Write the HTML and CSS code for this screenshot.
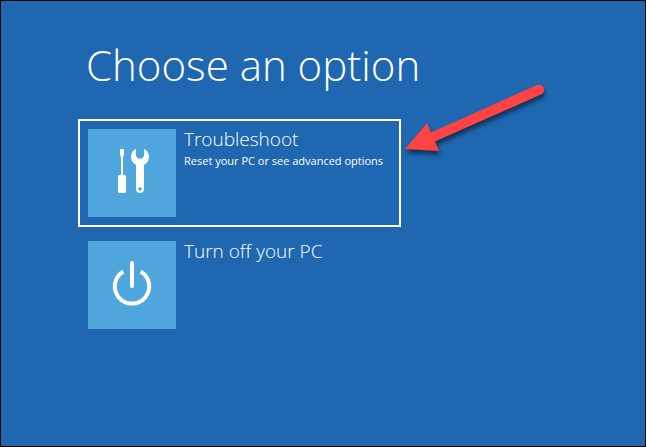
FILE: index.html
```html
<!DOCTYPE html>
<html lang="en">
<head>
    <meta charset="UTF-8">
    <title>Choose an option</title>
    <link rel="stylesheet" href="styles.css">
</head>
<body>
    <main class="screen">
        <h1 class="title">Choose an option</h1>

        <div class="options">
            <!-- Troubleshoot -->
            <button class="option selected" type="button">
                <svg class="tile" viewBox="0 0 88 88" aria-hidden="true">
                    <path fill="#fff" d="M32 20h4v5l-1 4v17h1.500q1.500 0 1.500 1.500v15q0 1.500-1.500 1.500h-5q-1.500 0-1.500-1.500v-15q0-1.500 1.500-1.500H33V29l-1-4z"/>
                    <path fill="#fff" fill-rule="evenodd" d="M48 20v7l2 2.500h4l2-2.500v-7c3 1.300 5 4.300 5 8 0 3.600-2 6.500-5 8v24a4 4 0 0 1-8 0V36c-3-1.500-5-4.400-5-8 0-3.700 2-6.700 5-8zM52 58.200a1.800 1.800 0 1 0 0 3.600a1.800 1.800 0 1 0 0-3.600z"/>
                </svg>
                <span class="text">
                    <span class="name">Troubleshoot</span>
                    <span class="hint">Reset your PC or see advanced options</span>
                </span>
            </button>

            <!-- Turn off -->
            <button class="option" type="button">
                <svg class="tile" viewBox="0 0 88 88" aria-hidden="true">
                    <g fill="none" stroke="#fff" stroke-width="4">
                        <path d="M35.300 30.500a17.200 17.200 0 1 0 17.400 0"/>
                        <path stroke-linecap="round" d="M44 22v23"/>
                    </g>
                </svg>
                <span class="text">
                    <span class="name">Turn off your PC</span>
                </span>
            </button>

            <svg class="arrow" viewBox="0 0 152 84" aria-hidden="true">
                <path fill="#ff4343" d="M4 68L26 42l4 9.500L136 4a5 5 0 0 1 4 9.500L34 60.500l4 9.500z"/>
            </svg>
        </div>
    </main>
</body>
</html>
```
FILE: styles.css
```css
* {
    box-sizing: border-box;
}

body {
    margin: 0;
    background: #1f67b1;
    color: white;
    font-family: "Open Sans", "Noto Sans", sans-serif;
}

.screen {
    min-height: 100vh;
    padding: 34px 77px;
    border: 1px solid black;
}

.title {
    margin: 0 0 24px 8px;
    font-size: 42px;
    font-weight: 300;
    line-height: 60px;
}

.options {
    position: relative;
    display: flex;
    flex-direction: column;
    gap: 4px;
    width: 100%;
    max-width: 323px;
}

.option {
    display: flex;
    align-items: flex-start;
    gap: 8px;
    padding: 8px;
    border: 2px solid transparent;
    background: none;
    color: inherit;
    font-family: inherit;
    text-align: left;
    cursor: pointer;
}

.option.selected {
    border-color: white;
}

.tile {
    flex: none;
    width: 88px;
    height: 88px;
    background: #4ea6dc;
}

.text {
    display: flex;
    flex-direction: column;
    white-space: nowrap;
}

.name {
    font-size: 19px;
    font-weight: 300;
    line-height: 20px;
}

.hint {
    font-size: 11px;
    line-height: 24px;
}

/* red pointer next to the selected option */
.arrow {
    position: absolute;
    top: -38px;
    left: 100%;
    width: 152px;
    height: 84px;
    filter: drop-shadow(1px 4px 2px rgba(0, 0, 0, 0.5));
}
```
